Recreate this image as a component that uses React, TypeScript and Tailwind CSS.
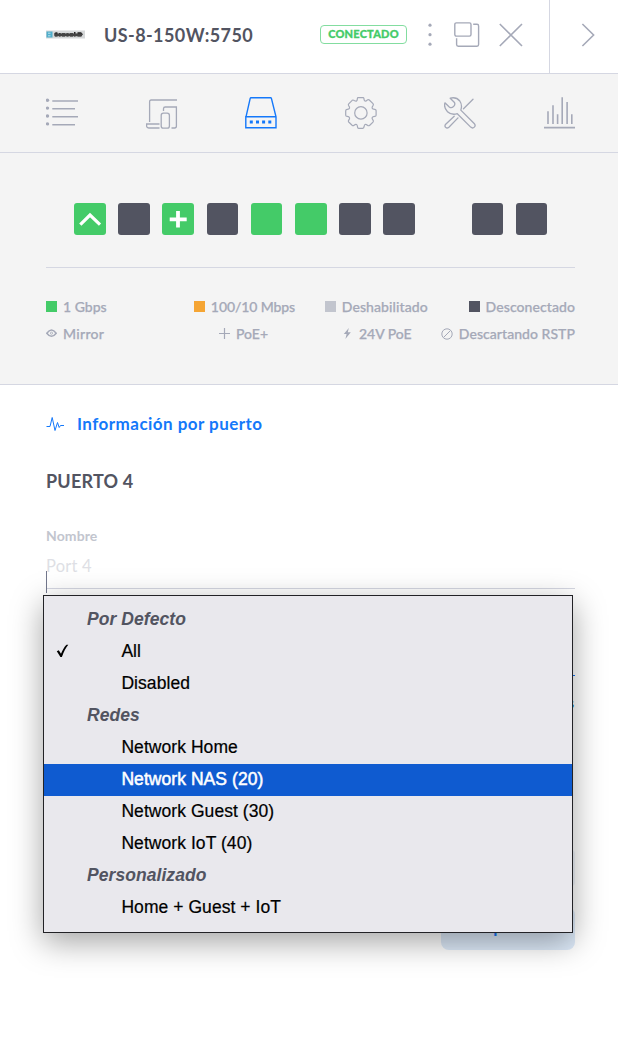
import React from "react";

const tabIcon = "h-8 w-8 shrink-0 fill-none stroke-[#a5a9b8]";

function ListIcon() {
  return (
    <svg className={tabIcon} viewBox="0 0 32 32" strokeWidth="1.6">
      <path d="M6.3 4H32M6.3 11.8H29M6.3 19.8H32M6.3 27.7H29" />
      <g className="fill-[#a5a9b8] stroke-none">
        <circle cx="1.5" cy="3.2" r="1.7" />
        <circle cx="1.5" cy="11.1" r="1.7" />
        <circle cx="1.5" cy="19" r="1.7" />
        <circle cx="1.5" cy="26.9" r="1.7" />
      </g>
    </svg>
  );
}

function DevicesIcon() {
  return (
    <svg className={tabIcon} viewBox="0 0 32 32" strokeWidth="1.3">
      <path d="M3.6 25V4.6Q3.6 3 5.2 3H31M17.5 14V11.8Q17.5 10 19.3 10H30.4V28.9Q30.4 31 28.6 31H25.5M13.5 27H.6V28.9Q.6 31 2.7 31H13.5" />
      <rect x="15.2" y="16.2" width="8.2" height="15" rx="2.2" />
    </svg>
  );
}

function SwitchIcon() {
  return (
    <svg className="h-8 w-8 shrink-0 fill-none stroke-[#1478fa]" viewBox="0 0 32 32" strokeWidth="1.4">
      <path d="M1 19.8L5.2 1.4Q5.4.7 6 .7H25.6Q26.2.7 26.4 1.4L31 19.8V30.8H.8V19.8H31" />
      <path d="M4.8 25.1h3M11 25.1h3M17.1 25.1h3M23.3 25.1h3" strokeWidth="3" />
    </svg>
  );
}

function GearIcon() {
  return (
    <svg className={tabIcon} viewBox="0 0 32 32" strokeWidth="1.2" strokeLinejoin="round">
      <path d="M12.9 .6H18.1Q18.7 .6 18.9 1.4L19.2 3.1Q19.5 4 20.4 4.1Q21.2 4.1 22.2 3.1Q23.4 2.2 24.3 3L28 6.7Q28.8 7.6 28 8.7Q26.7 10.3 27.2 11.3Q27.5 12.2 29.8 12.4Q31 12.6 31.1 13.6V18.3Q31 19.3 29.8 19.4Q27.5 19.7 27.2 20.6Q26.7 21.6 28 23.2Q28.8 24.2 28 25.1L24.5 28.5Q23.5 29.1 22.4 28.2Q21 27.1 20 27.5Q19.3 27.8 19.1 29.7Q18.9 31.2 17.8 31.3H13.6Q12.7 31.2 12.5 29.8Q12.3 27.9 11.5 27.5Q10.6 27.1 9.1 28.2Q8 29 7.1 28.2L3.7 25Q2.9 24.1 3.8 23Q4.9 21.7 4.5 20.7Q4.1 19.7 2.2 19.4Q.8 19.2.7 18.2V13.7Q.8 12.6 2.2 12.4Q4.1 12.2 4.5 11.2Q4.9 10.2 3.8 8.8Q2.9 7.6 3.7 6.8L7.2 3.3Q8.1 2.6 9.2 3.5Q10.7 4.5 11.5 4.1Q12.2 3.7 12.3 2.1Q12.4 .7 12.9 .6Z" />
      <circle cx="15.9" cy="15.9" r="6.2" />
    </svg>
  );
}

function ToolsIcon() {
  return (
    <svg className={tabIcon} viewBox="0 0 32 32" strokeWidth="1.3" strokeLinejoin="round" strokeLinecap="round">
      <path d="M6.2 1.2Q12.2-.4 15.8 4Q18.6 8 16.8 13.1L30.2 26.5Q32 28.4 30.3 30.1Q28.6 31.8 26.7 30.1L13.3 16.7Q7.6 18.5 3.5 14.7Q-.4 11 .9 5.8L5.3 9.9Q7.2 11.5 9.5 9.6Q11.8 7.3 10.2 5.2Z" />
      <path d="M29 2.2L19.5 11.7M10.2 19.2L1.7 27.3Q.3 28.9 1.6 30.3Q3.1 31.8 4.9 30.2L14 20.9" />
    </svg>
  );
}

function ChartIcon() {
  return (
    <svg className={tabIcon} viewBox="0 0 32 32" strokeWidth="1.6">
      <path d="M4 14.3V27M9 8.2V27M13.6 17.2V27M18.2 .2V27M23.1 5V27M27.8 17.2V27M0 30.6H31" />
    </svg>
  );
}

type PortKind = "off" | "on" | "uplink" | "poe";
const ports: PortKind[] = ["uplink", "off", "poe", "off", "on", "on", "off", "off"];

function Port({ kind }: { kind: PortKind }) {
  return (
    <div className={`h-8 w-[31.6px] rounded-[3px] ${kind === "off" ? "bg-[#525461]" : "bg-[#44cb68]"}`}>
      {kind === "uplink" && (
        <svg viewBox="0 0 32 32" className="size-8 fill-none stroke-white" strokeWidth="3.2">
          <path d="M6.3 21.6L16 12L26 21.6" />
        </svg>
      )}
      {kind === "poe" && (
        <svg viewBox="0 0 32 32" className="size-8 fill-none stroke-white" strokeWidth="3.8">
          <path d="M7.7 16.3H24.7M16 8V24.5" />
        </svg>
      )}
    </div>
  );
}

function Swatch({ color, label }: { color: string; label: string }) {
  return (
    <div className="flex items-center">
      <span className={`mr-[6px] size-[11px] ${color}`} />
      {label}
    </div>
  );
}

const legendIcon = "mr-[6px] size-[11px] fill-none stroke-[#a5a9b8]";
const legendRow = "flex h-[27px] items-center whitespace-nowrap text-[14px] font-medium leading-none text-[#a5a9b8] [-webkit-text-stroke:0.25px_#a5a9b8]";

type Row = { label: string; group?: boolean; checked?: boolean; active?: boolean };
const rows: Row[] = [
  { label: "Por Defecto", group: true },
  { label: "All", checked: true },
  { label: "Disabled" },
  { label: "Redes", group: true },
  { label: "Network Home" },
  { label: "Network NAS (20)", active: true },
  { label: "Network Guest (30)" },
  { label: "Network IoT (40)" },
  { label: "Personalizado", group: true },
  { label: "Home + Guest + IoT" },
];

function ProfileMenu() {
  return (
    <div className="absolute left-[43px] top-[595px] w-[530px] border border-[#222226] bg-[#e9e8ed] py-2 font-['Liberation_Sans',sans-serif] text-[17.5px] tracking-[0.06px] text-black shadow-[0_9px_30px_rgba(0,0,0,0.36)]">
      {rows.map((r) => (
        <div
          key={r.label}
          className={`flex h-8 items-center pb-[2px] ${
            r.group
              ? "pl-[43px] font-bold italic text-[#525461]"
              : r.active
                ? "bg-[#0f5bd0] pl-[77.4px] text-white [-webkit-text-stroke:0.5px_white]"
                : r.checked
                  ? "pl-3 [-webkit-text-stroke:0.2px_black]"
                  : "pl-[77.4px] [-webkit-text-stroke:0.2px_black]"
          }`}
        >
          {r.checked && (
            <svg viewBox="0 0 13 14" className="mr-[52.4px] h-[14px] w-[13px]">
              <path d="M.8 7.2L2.8 6.2L5 9.8Q7.5 3.5 10.5 .7H12.3Q8.5 5.2 5.9 13H4.4Z" fill="black" />
            </svg>
          )}
          <span>{r.label}</span>
        </div>
      ))}
    </div>
  );
}

export default function App() {
  return (
    <div className="relative h-[1042px] w-[618px] overflow-hidden bg-white font-['Lato',sans-serif] text-[#525461]">
      <header className="flex h-[74px] border-b border-[#d5d7e2]">
        <div className="flex h-full w-[550px] items-center border-r border-[#d5d7e2] pb-1 pl-[46px]">
          <svg viewBox="0 0 39 9" className="h-[9px] w-[39px] shrink-0 blur-[0.6px]">
            <rect y=".5" width="39" height="8" fill="#d6d8d9" />
            <rect x=".5" y="1.5" width="6" height="6" fill="#50aecb" />
            <path d="M2 3.2h2.5M2 5.8h2.5" stroke="#bce2ed" />
            <path d="M8.5 3Q9.5 2 11.5 2.4V6.4H9L8.5 5Z M13 3h1.6v3.5H13z M16 3.3h3v3.2h-3z M20.5 3.3h2v3.2h-2z M24 3.2h3v3.3h-3z M28 2h1.5v4.5H28z M31.5 2.3h3.6l1.8 2-1.8 2.2h-3.6z" fill="#222" />
            <path d="M8.5 4.8H36" stroke="#444" strokeWidth="2.8" />
          </svg>
          <h1 className="ml-[19px] w-[216px] pt-[1px] text-[18px] font-bold tracking-[0.4px] whitespace-nowrap">US-8-150W:5750</h1>
          <span className="flex h-[19px] w-[87px] shrink-0 items-center justify-center rounded-[4px] border border-[#83dda0] text-[11px] font-black tracking-[0.2px] text-[#44cb68] [-webkit-text-stroke:0.3px_#44cb68]">
            CONECTADO
          </span>
          <svg viewBox="0 0 4 24" className="ml-[21px] h-6 w-1 shrink-0 fill-[#a5a9b8]">
            <circle cx="2" cy="2.2" r="1.6" />
            <circle cx="2" cy="11.7" r="1.6" />
            <circle cx="2" cy="21.2" r="1.6" />
          </svg>
          <svg viewBox="0 0 26 26" className="ml-[22px] size-[26px] shrink-0 fill-none stroke-[#a5a9b8]" strokeWidth="1.4">
            <rect x=".8" y=".9" width="16.2" height="13.2" rx="1.5" />
            <path d="M19.2 2.3H23Q24.6 2.3 24.6 4V22.6Q24.6 24.2 23 24.2H4.2Q2.6 24.2 2.6 22.6V16.2" />
          </svg>
          <svg viewBox="0 0 24 24" className="ml-[19px] size-6 shrink-0 fill-none stroke-[#a5a9b8]" strokeWidth="1.6">
            <path d="M.8 1L23 23M23 1L.8 23" />
          </svg>
        </div>
        <div className="flex flex-1 items-center pb-[4px] pl-[31px]">
          <svg viewBox="0 0 14 24" className="h-6 w-[14px] fill-none stroke-[#a5a9b8]" strokeWidth="1.6">
            <path d="M1.4 1L12.6 12L1.4 23" />
          </svg>
        </div>
      </header>

      <nav className="flex h-[79px] items-start justify-between border-b border-[#d5d7e2] bg-[#f4f4f4] pl-[46px] pr-[42px] pt-[23px]">
        <ListIcon />
        <DevicesIcon />
        <SwitchIcon />
        <GearIcon />
        <ToolsIcon />
        <ChartIcon />
      </nav>

      <section className="h-[232px] border-b border-[#d5d7e2] bg-[#f4f4f4] pl-[46px] pr-[43px] pt-[50px]">
        <div className="flex h-[65px] gap-[12.6px] border-b border-[#d5d7e2] pl-[28px]">
          {ports.map((kind, i) => (
            <Port key={i} kind={kind} />
          ))}
          <div className="ml-[44.2px]">
            <Port kind="off" />
          </div>
          <Port kind="off" />
        </div>
        <div className={`mt-[25px] ${legendRow}`}>
          <div className="w-[148px]"><Swatch color="bg-[#44cb68]" label="1 Gbps" /></div>
          <div className="w-[131px] tracking-[-0.1px]"><Swatch color="bg-[#f5a534]" label="100/10 Mbps" /></div>
          <div className="w-[144px] tracking-[0.1px]"><Swatch color="bg-[#c2c5ce]" label="Deshabilitado" /></div>
          <div className="tracking-[0.08px]"><Swatch color="bg-[#525461]" label="Desconectado" /></div>
        </div>
        <div className={legendRow}>
          <div className="flex w-[173px] items-center tracking-[0.3px]">
            <svg viewBox="0 0 11 11" className={legendIcon} strokeWidth="1.5">
              <path d="M.8 5.2Q5.5-1.2 10.2 5.2Q5.5 11.4.8 5.2Z" />
              <circle cx="5.5" cy="5.2" r="1.1" strokeWidth="0.8" />
            </svg>
            Mirror
          </div>
          <div className="flex w-[123px] items-center">
            <svg viewBox="0 0 11 11" className={legendIcon} strokeWidth="1.2">
              <path d="M0 5.5H11M5.5 0V11" />
            </svg>
            PoE+
          </div>
          <div className="flex w-[99px] items-center">
            <svg viewBox="0 0 11 11" className="mr-[6px] size-[11px] fill-[#a5a9b8]">
              <path d="M6.8 0L1.8 6H4.6L3.4 11L8.8 4.3H5.8Z" />
            </svg>
            24V PoE
          </div>
          <div className="flex items-center tracking-[0.05px]">
            <svg viewBox="0 0 12 12" className="mr-[6px] size-3 fill-none stroke-[#a5a9b8]" strokeWidth="1">
              <circle cx="6" cy="6" r="5.2" />
              <path d="M2.6 9.4L9.4 2.6" />
            </svg>
            Descartando RSTP
          </div>
        </div>
      </section>

      <main className="pl-[46px] pr-[43px] pt-[27px]">
        <div className="flex h-[24px] items-center text-[17px] font-bold tracking-[0.46px] text-[#1478fa]">
          <svg viewBox="0 0 18 16" className="mr-[13px] h-4 w-[18px] fill-none stroke-current" strokeWidth="1">
            <path d="M.5 10.5H4L6.2 1.5L9 14.5L11.5 6.5L13.2 11.5L14.5 9.5H18" />
          </svg>
          Información por puerto
        </div>
        <h2 className="mt-[32px] h-[26px] text-[18px] font-bold leading-[26px] tracking-[0.2px]">PUERTO 4</h2>
        <label className="mt-[32px] block h-[20px] text-[14px] font-bold leading-[20px] tracking-[0.1px] text-[#c2c5ce]">Nombre</label>
        <div className="h-[43px] border-b border-[#d5d7e2] pt-[8px] text-[16.5px] leading-[24px] tracking-[0.2px] text-[#dedfe5]">Port 4</div>
        <div className="h-[87px] border-b border-[#1478fa]" />
        <div className="h-[31px] pr-[1px] text-right text-[14px] font-medium leading-[54px] text-[#1478fa]">Ajustes</div>
        <div className="mt-[143px] h-[36px] rounded bg-[#f0f4fa]" />
        <button className="ml-auto mt-[21px] flex h-[43px] w-[134px] items-center justify-center rounded-[8px] bg-[#deebfa] pb-[4px] text-[17px] font-bold text-[#1478fa]">
          Aplicar
        </button>
      </main>
      <div className="absolute left-[46px] top-[571px] h-[22px] w-px bg-[#72778d]" />
      <ProfileMenu />
    </div>
  );
}
